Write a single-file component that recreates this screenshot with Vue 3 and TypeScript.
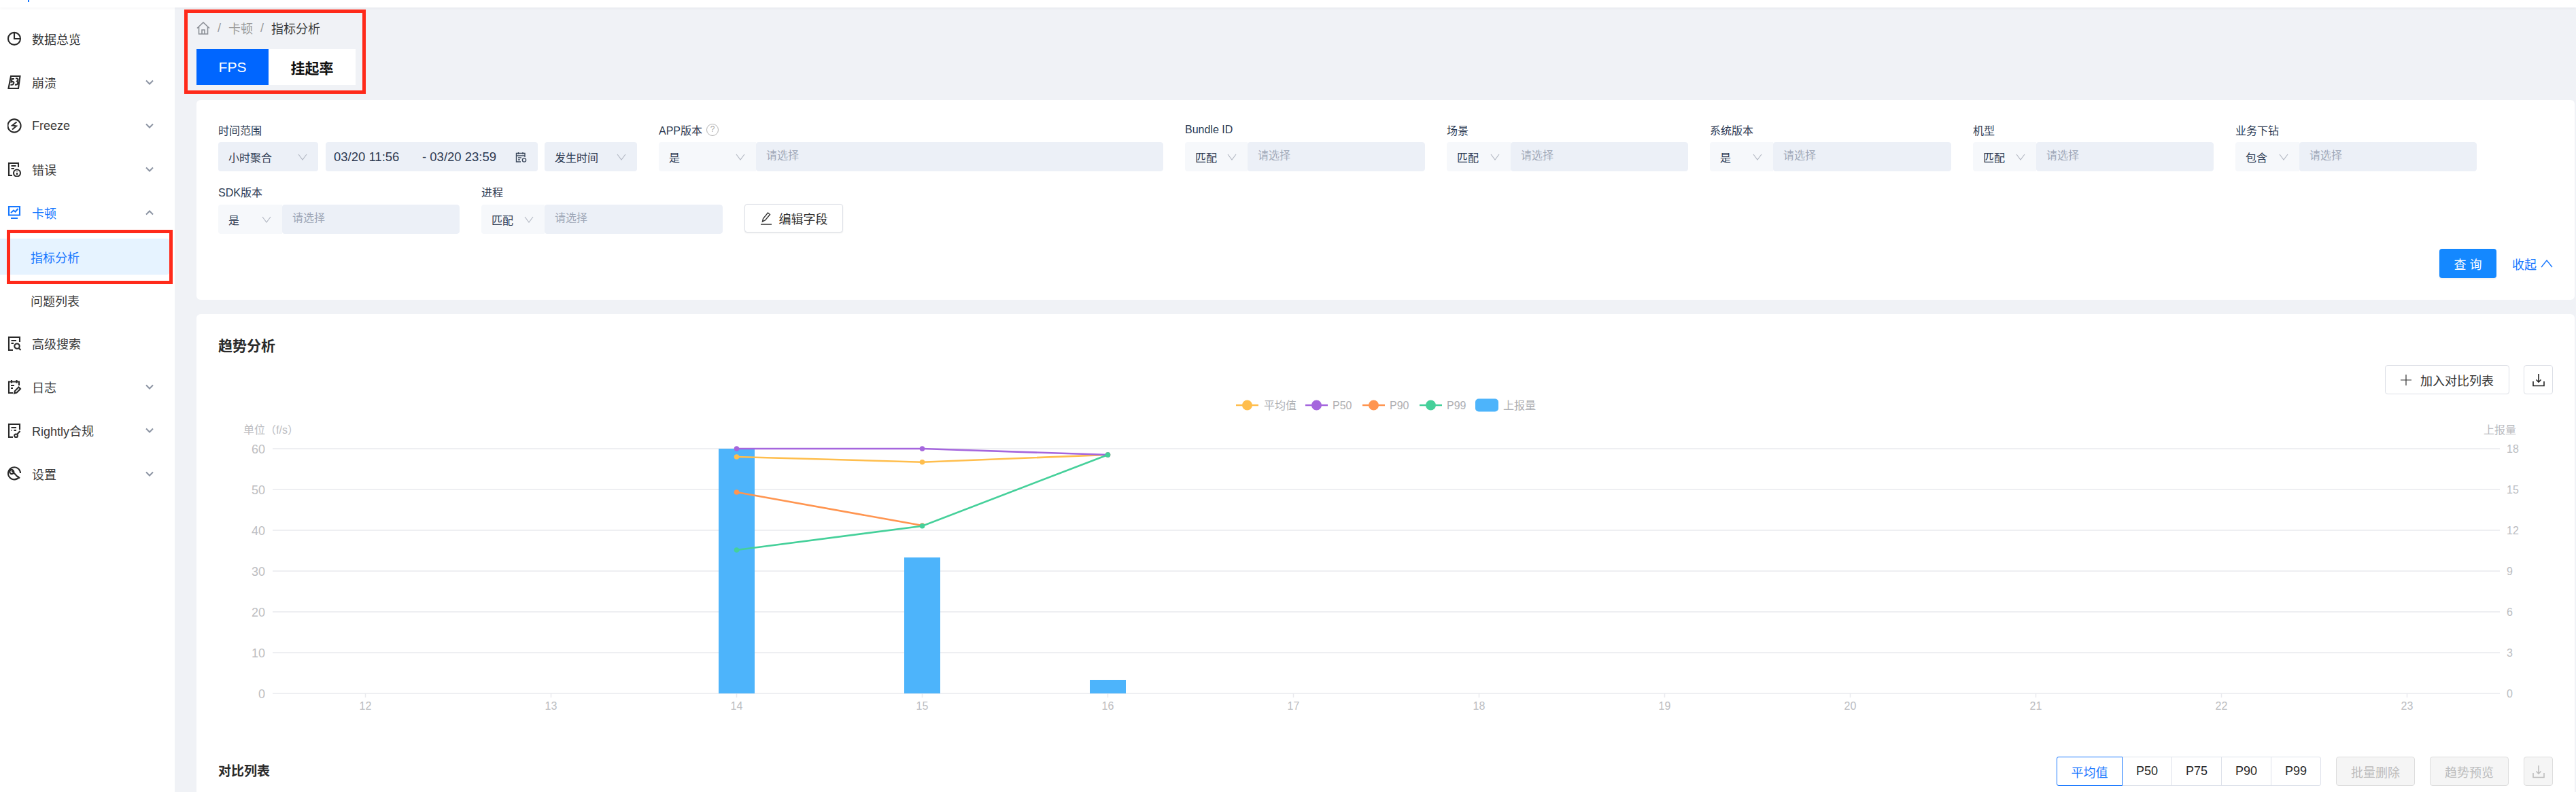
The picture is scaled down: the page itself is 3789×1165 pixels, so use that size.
<script setup lang="ts">
interface NavItem {
  label: string
  icon?: string
  arrow?: 'down' | 'up'
  sub?: boolean
  active?: boolean
  open?: boolean
}

const icons: Record<string, string> = {
  clock: 'M10 1.9a9 9 0 1 0 0 18a9 9 0 0 0 0-18zM10 3v8h8.5',
  crash: 'M5 2H18.5L16 20H1.5ZM10 6H6.6L5.8 10.5C9 9.5 10 11 9 13C8.4 14.5 6.5 15 4.5 14.5M12 5.5C15.5 4.5 16.6 7 14 9.5C16.6 11 15.5 15.5 11 14.5',
  freeze: 'M10 1.4a9.6 9.6 0 1 0 0 19.2a9.6 9.6 0 0 0 0-19.2zM13.5 5.5L7 10.5L13 11.5L7 16.5',
  error: 'M16 8V2H2V20H7M5.5 6H12.5M5.5 10H10M14 11.5a5 5 0 1 0 0 10a5 5 0 0 0 0-10zM14 14.5V15M14 16V19',
  monitor: 'M2 2H18V14.5H2ZM5 11L9 7.5L11.5 9.5L15.5 5M5 19H15',
  search: 'M18 9V2H2V21H8M5.5 7H13M5.5 11H9M14 11.5a3.7 3.7 0 1 0 0 7.4a3.7 3.7 0 0 0 0-7.4zM16.5 18L19.5 21',
  log: 'M8 20H2V3.5H17V9M6 1V5.5M13.5 1V5.5M5 9H10M5 13H8M10 20.5L11 17L16.5 11.5L19 14L13.5 19.5Z',
  rightly: 'M18 10V2H2V21H8M5.5 7H13M5.5 11H6.5M9.5 11H13M12.5 16.5a2.4 2.4 0 1 0 0 4.8a2.4 2.4 0 0 0 0-4.8zM14 17L18.5 12',
  settings: 'M17 16A9 9 0 1 1 19 10M6.5 6.5L15 15.5M8 5.5a3 3 0 1 0 0 5a3 3 0 0 0 0-5zM15 14.5L18 17.5',
}

const nav: NavItem[] = [
  { label: '数据总览', icon: 'clock' },
  { label: '崩溃', icon: 'crash', arrow: 'down' },
  { label: 'Freeze', icon: 'freeze', arrow: 'down' },
  { label: '错误', icon: 'error', arrow: 'down' },
  { label: '卡顿', icon: 'monitor', arrow: 'up', open: true },
  { label: '指标分析', sub: true, active: true },
  { label: '问题列表', sub: true },
  { label: '高级搜索', icon: 'search' },
  { label: '日志', icon: 'log', arrow: 'down' },
  { label: 'Rightly合规', icon: 'rightly', arrow: 'down' },
  { label: '设置', icon: 'settings', arrow: 'down' },
]

interface Field {
  label: string
  width: number
  prefix: string
  prefixWidth: number
  help?: boolean
}

const firstFields: Field[] = [
  { label: 'APP版本', width: 742, prefix: '是', prefixWidth: 143, help: true },
  { label: 'Bundle ID', width: 353, prefix: '匹配', prefixWidth: 92 },
  { label: '场景', width: 355, prefix: '匹配', prefixWidth: 94 },
  { label: '系统版本', width: 355, prefix: '是', prefixWidth: 93 },
  { label: '机型', width: 354, prefix: '匹配', prefixWidth: 93 },
  { label: '业务下钻', width: 355, prefix: '包含', prefixWidth: 94 },
]
const secondFields: Field[] = [
  { label: 'SDK版本', width: 355, prefix: '是', prefixWidth: 94 },
  { label: '进程', width: 355, prefix: '匹配', prefixWidth: 93 },
]

/* chart: coordinates are relative to the svg, whose origin is page (321, 580) */
const plotLeft = 80
const plotRight = 3356
const plotTop = 80
const plotBottom = 440
const step = (plotRight - plotLeft) / 12
const hours = [12, 13, 14, 15, 16, 17, 18, 19, 20, 21, 22, 23]
const xAt = (i: number) => plotLeft + step * (i + 0.5)
const cats = hours.map((h, i) => ({ h, x: xAt(i) }))
const leftTicks = [60, 50, 40, 30, 20, 10, 0].map((v) => ({ v, y: plotBottom - v * 6 }))
const rightTicks = [18, 15, 12, 9, 6, 3, 0].map((v) => ({ v, y: plotBottom - v * 20 }))
const bars = [
  { i: 2, top: plotTop },
  { i: 3, top: 240 },
  { i: 4, top: 420 },
].map((b) => ({ x: xAt(b.i) - 26.5, y: b.top, h: plotBottom - b.top }))

const series = [
  { color: '#ffbe4d', pts: [[2, 92], [3, 99.7], [4, 89]] },
  { color: '#ff9550', pts: [[2, 144], [3, 193]] },
  { color: '#a566dd', pts: [[2, 80], [3, 80], [4, 89]] },
  { color: '#45d09a', pts: [[2, 229], [3, 193.7], [4, 89]] },
].map((s) => ({
  color: s.color,
  dots: s.pts.map((p) => ({ x: xAt(p[0]), y: p[1] })),
  line: s.pts.map((p) => `${xAt(p[0])},${p[1]}`).join(' '),
}))

const legend = [
  { label: '平均值', color: '#ffbe4d', x: 1497, tx: 1538 },
  { label: 'P50', color: '#a566dd', x: 1599, tx: 1639 },
  { label: 'P90', color: '#ff9550', x: 1683, tx: 1723 },
  { label: 'P99', color: '#45d09a', x: 1767, tx: 1807 },
]

const segments = ['平均值', 'P50', 'P75', 'P90', 'P99']
</script>

<template>
  <div class="page">
    <div class="topbar"><span class="logo-tip"></span></div>
    <div class="layout">
      <aside class="sidebar">
        <div
          v-for="item in nav"
          :key="item.label"
          class="nav-item"
          :class="{ sub: item.sub, active: item.active, open: item.open }"
        >
          <svg v-if="item.icon" class="nav-icon" viewBox="0 0 21 22" width="21" height="22">
            <path :d="icons[item.icon]" />
          </svg>
          <span class="nav-label">{{ item.label }}</span>
          <svg v-if="item.arrow" class="nav-arrow" viewBox="0 0 12 8" width="12" height="8">
            <path :d="item.arrow === 'down' ? 'M1 1.5L6 6.5L11 1.5' : 'M1 6.5L6 1.5L11 6.5'" />
          </svg>
        </div>
      </aside>

      <main class="main">
        <div class="crumbs">
          <svg class="home" viewBox="0 0 20 19" width="20" height="19">
            <path d="M1 9.5L10 1L19 9.5M3.5 8V18H16.5V8M8 18V12H12V18" />
          </svg>
          <span class="sep">/</span>
          <span class="crumb-link">卡顿</span>
          <span class="sep">/</span>
          <span class="crumb-now">指标分析</span>
        </div>
        <div class="tabs">
          <div class="tab tab-on">FPS</div>
          <div class="tab tab-off">挂起率</div>
        </div>

        <section class="card filters">
          <div class="row">
            <div class="field time-field">
              <div class="label">时间范围</div>
              <div class="time-group">
                <div class="select mode">
                  <span>小时聚合</span>
                  <svg class="chev" viewBox="0 0 14 10"><path d="M1 1L7 9L13 1" /></svg>
                </div>
                <div class="dates">
                  <span class="date-a">03/20 11:56</span>
                  <span class="date-b">- 03/20 23:59</span>
                  <svg class="cal" viewBox="0 0 17 16" width="17" height="16">
                    <path d="M8 15H1.5V2.5H14V8M1.5 6H14M4.5 1V4M11 1V4M4 9H9M4 12H7" />
                    <circle cx="13" cy="12.5" r="2.6" />
                  </svg>
                </div>
                <div class="select occur">
                  <span>发生时间</span>
                  <svg class="chev" viewBox="0 0 14 10"><path d="M1 1L7 9L13 1" /></svg>
                </div>
              </div>
            </div>
            <div v-for="f in firstFields" :key="f.label" class="field" :style="{ width: f.width + 'px' }">
              <div class="label">
                {{ f.label }}
                <span v-if="f.help" class="help">?</span>
              </div>
              <div class="combo">
                <div class="prefix" :style="{ width: f.prefixWidth + 'px' }">
                  <span>{{ f.prefix }}</span>
                  <svg class="chev" viewBox="0 0 14 10"><path d="M1 1L7 9L13 1" /></svg>
                </div>
                <div class="holder">请选择</div>
              </div>
            </div>
          </div>

          <div class="row row-two">
            <div v-for="f in secondFields" :key="f.label" class="field" :style="{ width: f.width + 'px' }">
              <div class="label">{{ f.label }}</div>
              <div class="combo">
                <div class="prefix" :style="{ width: f.prefixWidth + 'px' }">
                  <span>{{ f.prefix }}</span>
                  <svg class="chev" viewBox="0 0 14 10"><path d="M1 1L7 9L13 1" /></svg>
                </div>
                <div class="holder">请选择</div>
              </div>
            </div>
            <button class="btn edit-btn">
              <svg viewBox="0 0 18 20" width="18" height="20" class="pencil">
                <path d="M1 19H17M3.5 15L4.5 10.5L11.5 2L14.5 4.5L7.5 13Z" />
              </svg>
              编辑字段
            </button>
          </div>

          <div class="actions">
            <button class="query">查 询</button>
            <span class="collapse">
              收起
              <svg viewBox="0 0 18 12" width="18" height="12"><path d="M1 11L9 1L17 11" /></svg>
            </span>
          </div>
        </section>

        <section class="card trend">
          <h2 class="title big">趋势分析</h2>
          <div class="chart-actions">
            <button class="btn add-btn">
              <svg viewBox="0 0 16 16" width="16" height="16"><path d="M8 0V16M0 8H16" /></svg>
              加入对比列表
            </button>
            <button class="btn icon-btn">
              <svg viewBox="0 0 20 20" width="20" height="20"><path d="M10 1V13M6.5 9.5L10 13L13.5 9.5M2 12V18.5H18V12" /></svg>
            </button>
          </div>

          <svg class="chart" width="3434" height="500" viewBox="0 0 3434 500">
            <g v-for="l in legend" :key="l.label">
              <line :x1="l.x" :x2="l.x + 33" y1="16" y2="16" :stroke="l.color" stroke-width="2.4" />
              <circle :cx="l.x + 16.5" cy="16" r="7.5" :fill="l.color" />
              <text :x="l.tx" y="21.5" class="t-legend">{{ l.label }}</text>
            </g>
            <rect x="1849" y="6.5" width="34" height="19" rx="5" fill="#4db4fb" />
            <text x="1890" y="21.5" class="t-legend">上报量</text>

            <text x="37" y="58" class="t-axis">单位（f/s）</text>
            <text x="3332" y="58" class="t-axis">上报量</text>

            <line
              v-for="t in leftTicks"
              :key="t.v"
              :x1="plotLeft"
              :x2="plotRight"
              :y1="t.y"
              :y2="t.y"
              class="grid"
            />
            <text v-for="t in leftTicks" :key="'l' + t.v" x="69" :y="t.y + 6.5" class="t-left">{{ t.v }}</text>
            <text v-for="t in rightTicks" :key="'r' + t.v" x="3366" :y="t.y + 6" class="t-axis">{{ t.v }}</text>

            <g v-for="c in cats" :key="c.h">
              <line :x1="c.x" :x2="c.x" :y1="plotBottom" :y2="plotBottom + 6" class="grid" />
              <text :x="c.x" :y="plotBottom + 24" class="t-axis t-mid">{{ c.h }}</text>
            </g>

            <rect v-for="(b, i) in bars" :key="i" :x="b.x" :y="b.y" width="53" :height="b.h" fill="#4db4fb" />

            <g v-for="s in series" :key="s.color">
              <polyline :points="s.line" fill="none" :stroke="s.color" stroke-width="2.6" />
              <circle v-for="(d, i) in s.dots" :key="i" :cx="d.x" :cy="d.y" r="3.8" :fill="s.color" />
            </g>
          </svg>

          <div class="compare-head">
            <h2 class="title">对比列表</h2>
            <div class="compare-tools">
              <div class="segments">
                <div v-for="(s, i) in segments" :key="s" class="seg" :class="{ 'seg-on': i === 0 }">{{ s }}</div>
              </div>
              <button class="btn ghost batch">批量删除</button>
              <button class="btn ghost preview">趋势预览</button>
              <button class="btn ghost icon-btn">
                <svg viewBox="0 0 20 20" width="20" height="20"><path d="M10 1V13M6.5 9.5L10 13L13.5 9.5M2 12V18.5H18V12" /></svg>
              </button>
            </div>
          </div>
        </section>
      </main>
    </div>

    <div class="mark mark-head"></div>
    <div class="mark mark-nav"></div>
  </div>
</template>

<style>
html,
body {
  margin: 0;
  background: #f0f2f6;
  overflow: hidden;
}
</style>

<style scoped>
.page {
  position: relative;
  width: 3789px;
  height: 1165px;
  overflow: hidden;
  display: flex;
  flex-direction: column;
  background: #f0f2f6;
  font-family: "Liberation Sans", "Noto Sans CJK SC", sans-serif;
  color: #333;
}
.topbar {
  flex: none;
  position: relative;
  z-index: 2;
  height: 11px;
  background: #fff;
  box-shadow: 0 1px 4px rgba(30, 40, 60, 0.05);
}
.logo-tip {
  display: block;
  width: 2px;
  height: 3px;
  margin-left: 41px;
  background: #1677ff;
}
.layout {
  flex: 1;
  display: flex;
  min-height: 0;
}
.sidebar {
  flex: none;
  display: flex;
  flex-direction: column;
  width: 257px;
  padding-top: 14px;
  background: #fff;
  font-size: 18px;
  color: #3a3a3a;
}
.nav-item {
  flex: none;
  display: flex;
  align-items: center;
  height: 64px;
  padding-left: 11px;
  padding-right: 31px;
}
.nav-icon {
  flex: none;
  margin-right: 15px;
  fill: none;
  stroke: #2a2a2a;
  stroke-width: 2.1;
}
.nav-label {
  flex: 1;
}
.nav-arrow {
  flex: none;
  fill: none;
  stroke: #8c94a3;
  stroke-width: 2;
}
.nav-item.open {
  color: #1677ff;
}
.nav-item.open .nav-icon {
  stroke: #1677ff;
}
.nav-item.sub {
  height: 53px;
  margin: 6px 8px 5px 0;
  padding-left: 45px;
  border-radius: 0 4px 4px 0;
}
.nav-item.active {
  background: #e6f3ff;
  color: #1677ff;
}
.main {
  flex: 1;
  min-width: 0;
  padding: 18px 2px 0 32px;
}
.crumbs {
  display: flex;
  align-items: center;
  gap: 11px;
  height: 24px;
  font-size: 18px;
}
.home {
  fill: none;
  stroke: #8b8f96;
  stroke-width: 1.6;
}
.sep,
.crumb-link {
  color: #9a9a9a;
}
.crumb-now {
  color: #3a3a3a;
}
.tabs {
  display: flex;
  width: 234px;
  height: 53px;
  margin-top: 19px;
  background: #fff;
}
.tab {
  display: flex;
  align-items: center;
  justify-content: center;
  font-size: 21px;
}
.tab-on {
  width: 106px;
  background: #0066ff;
  color: #fff;
}
.tab-off {
  width: 128px;
  font-weight: 700;
  color: #111;
}
.card {
  background: #fff;
  border-radius: 6px;
}
.filters {
  height: 294px;
  box-sizing: border-box;
  margin-top: 22px;
  padding: 33px 32px 32px;
}
.row {
  display: flex;
  gap: 32px;
  align-items: flex-end;
}
.row-two {
  margin-top: 19px;
}
.time-field {
  width: 616px;
}
.label {
  display: flex;
  align-items: center;
  gap: 6px;
  height: 22px;
  margin-bottom: 7px;
  font-size: 16px;
  color: #2c3a52;
  white-space: nowrap;
}
.row-two .label {
  margin-bottom: 8px;
}
.help {
  box-sizing: border-box;
  width: 18px;
  height: 18px;
  border: 1.5px solid #b4b4b4;
  border-radius: 50%;
  font-size: 12px;
  line-height: 15px;
  text-align: center;
  color: #a8a8a8;
}
.time-group {
  display: flex;
  height: 43px;
  font-size: 16px;
  color: #2c3a52;
}
.select {
  display: flex;
  align-items: center;
  justify-content: space-between;
  box-sizing: border-box;
  padding: 0 16px 0 15px;
  background: #ecf0f7;
  border-radius: 4px;
}
.mode {
  width: 147px;
  margin-right: 11px;
}
.occur {
  width: 136px;
  margin-left: 10px;
}
.dates {
  display: flex;
  align-items: center;
  box-sizing: border-box;
  width: 312px;
  padding-left: 12px;
  background: #ecf0f7;
  border-radius: 4px;
  font-size: 18.5px;
}
.date-a {
  width: 130px;
}
.cal {
  margin-left: auto;
  margin-right: 16px;
  fill: none;
  stroke: #3d4a5e;
  stroke-width: 1.4;
}
.chev {
  flex: none;
  width: 14px;
  height: 10px;
  fill: none;
  stroke: #b4b9c4;
  stroke-width: 1.2;
}
.combo {
  display: flex;
  height: 43px;
  border-radius: 4px;
  overflow: hidden;
  font-size: 16px;
}
.prefix {
  display: flex;
  align-items: center;
  justify-content: space-between;
  flex: none;
  box-sizing: border-box;
  padding: 0 16px 0 15px;
  background: #f6f8fb;
  color: #2c3a52;
  white-space: nowrap;
}
.holder {
  flex: 1;
  box-sizing: border-box;
  padding: 6px 15px 0;
  background: #ecf0f7;
  border-radius: 4px;
  color: #a0a8b8;
}
.btn {
  display: flex;
  align-items: center;
  justify-content: center;
  box-sizing: border-box;
  padding: 0;
  border: 1px solid #dcdfe6;
  border-radius: 4px;
  background: #fff;
  font-family: inherit;
  font-size: 18px;
  color: #333;
  white-space: nowrap;
}
.edit-btn {
  flex: none;
  width: 145px;
  height: 42px;
  margin-bottom: 2px;
  gap: 10px;
  box-shadow: 0 1px 2px rgba(0, 0, 0, 0.08);
}
.pencil {
  fill: none;
  stroke: #333;
  stroke-width: 1.4;
}
.actions {
  display: flex;
  justify-content: flex-end;
  align-items: center;
  gap: 23px;
  margin-top: 22px;
}
.query {
  width: 84px;
  height: 43px;
  padding: 0;
  border: none;
  border-radius: 4px;
  background: #1488ff;
  box-shadow: 0 2px 2px rgba(0, 0, 0, 0.05);
  font-family: inherit;
  font-size: 18px;
  color: #fff;
}
.collapse {
  display: flex;
  align-items: center;
  gap: 6px;
  font-size: 18px;
  color: #1677ff;
}
.collapse svg {
  fill: none;
  stroke: #1677ff;
  stroke-width: 1.4;
}
.trend {
  margin-top: 21px;
  padding: 32px 32px 40px;
}
.title {
  margin: 0;
  font-size: 19px;
  line-height: 30px;
  font-weight: 700;
  color: #2a2a2a;
}
.title.big {
  font-size: 21px;
}
.chart-actions {
  display: flex;
  justify-content: flex-end;
  gap: 21px;
  margin-top: 13px;
}
.add-btn {
  width: 183px;
  height: 43px;
  gap: 13px;
}
.add-btn svg {
  fill: none;
  stroke: #333;
  stroke-width: 1.2;
}
.icon-btn {
  width: 43px;
  height: 43px;
}
.icon-btn svg {
  fill: none;
  stroke: #222;
  stroke-width: 1.6;
}
.chart {
  display: block;
  width: 3434px;
  height: 500px;
}
.grid {
  stroke: #e9eaee;
  stroke-width: 1.5;
}
.t-legend {
  font-size: 16px;
  fill: #aeb0b4;
}
.t-axis {
  font-size: 16px;
  fill: #bcbdc1;
}
.t-left {
  font-size: 18px;
  fill: #bcbdc1;
  text-anchor: end;
}
.t-mid {
  text-anchor: middle;
}
.compare-head {
  display: flex;
  align-items: center;
  justify-content: space-between;
  margin-top: 33px;
}
.compare-tools {
  display: flex;
  gap: 22px;
}
.segments {
  display: flex;
  height: 43px;
  font-size: 18px;
}
.seg {
  display: flex;
  align-items: center;
  justify-content: center;
  box-sizing: border-box;
  width: 74px;
  margin-left: -1px;
  border: 1px solid #dde1ea;
  color: #2a2a2a;
}
.seg:last-child {
  border-radius: 0 3px 3px 0;
}
.seg-on {
  position: relative;
  width: 97px;
  margin-left: 0;
  border-color: #1677ff;
  border-radius: 3px 0 0 3px;
  color: #1677ff;
  z-index: 1;
}
.ghost {
  height: 43px;
  background: #f5f5f5;
  border-color: #dddddd;
  color: #bdbdbd;
}
.ghost svg {
  stroke: #bdbdbd;
}
.batch,
.preview {
  width: 116px;
}
.mark {
  position: absolute;
  box-sizing: border-box;
  border: 5px solid #ff2a1a;
  pointer-events: none;
  z-index: 3;
}
.mark-head {
  left: 271px;
  top: 14px;
  width: 267px;
  height: 124px;
}
.mark-nav {
  left: 10px;
  top: 338px;
  width: 244px;
  height: 80px;
}
</style>
